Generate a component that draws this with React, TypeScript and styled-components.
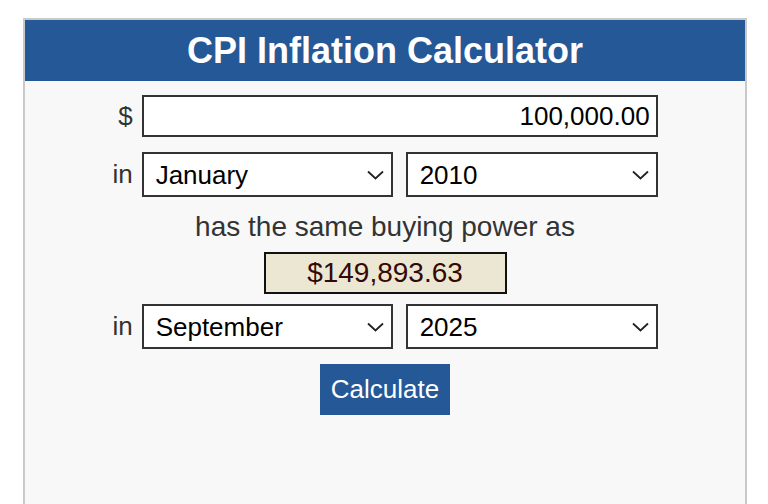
import React, { useState } from 'react';
import styled, { createGlobalStyle } from 'styled-components';

const GlobalStyle = createGlobalStyle`
  html, body {
    margin: 0;
    padding: 0;
    background: #ffffff;
    overflow: hidden;
  }
  body {
    font-family: "Liberation Sans", Arial, Helvetica, sans-serif;
  }
`;

const Page = styled.div`
  padding: 18px 0 0 23px;
`;

const Panel = styled.div`
  box-sizing: border-box;
  width: 724px;
  height: calc(100vh - 18px);
  border: 2px solid #c9c9c9;
  border-bottom: none;
  background: #f8f8f8;
`;

const Header = styled.h1`
  margin: 0;
  padding: 10px 0;
  background: #255897;
  color: #ffffff;
  font-size: 36px;
  line-height: 41px;
  font-weight: bold;
  text-align: center;
`;

const Form = styled.form`
  display: grid;
  grid-template-columns: auto 516px;
  column-gap: 9px;
  justify-content: center;
  align-items: center;
  padding-top: 14px;
`;

const Label = styled.label<{ $top?: number }>`
  justify-self: end;
  margin-top: ${p => p.$top ?? 0}px;
  font-size: 26px;
  color: #333333;
`;

const Row = styled.div<{ $top: number }>`
  grid-column: 2;
  margin-top: ${p => p.$top}px;
  display: grid;
  grid-template-columns: 251px 252px;
  column-gap: 13px;
`;

const AmountInput = styled.input`
  grid-column: 2;
  box-sizing: border-box;
  width: 516px;
  height: 42px;
  margin: 0;
  padding: 0 6px;
  border: 2px solid #333333;
  border-radius: 0;
  background: #ffffff;
  color: #000000;
  font-family: inherit;
  font-size: 26px;
  text-align: right;
  outline: none;
`;

const SelectWrap = styled.div`
  position: relative;
`;

const Select = styled.select`
  appearance: none;
  box-sizing: border-box;
  width: 100%;
  height: 45px;
  margin: 0;
  padding: 0 30px 0 12px;
  border: 2px solid #333333;
  border-radius: 0;
  background: #ffffff;
  color: #000000;
  font-family: inherit;
  font-size: 26px;
  outline: none;
`;

const Chevron = styled.svg`
  position: absolute;
  right: 9px;
  top: 18px;
  pointer-events: none;
`;

const Wide = styled.div<{ $top: number }>`
  grid-column: 1 / -1;
  justify-self: center;
  margin-top: ${p => p.$top}px;
`;

const SameText = styled(Wide)`
  font-size: 28px;
  line-height: 32px;
  color: #333333;
`;

const Result = styled(Wide)`
  box-sizing: border-box;
  width: 243px;
  height: 42px;
  border: 2px solid #111111;
  background: #ece7d2;
  color: #350808;
  font-size: 28px;
  line-height: 38px;
  text-align: center;
`;

const Button = styled.button`
  grid-column: 1 / -1;
  justify-self: center;
  margin-top: 15px;
  height: 51px;
  padding: 0 11px;
  border: none;
  border-radius: 0;
  background: #255897;
  color: #ffffff;
  font-family: inherit;
  font-size: 26px;
  cursor: pointer;
`;

const months = [
  'January', 'February', 'March', 'April', 'May', 'June',
  'July', 'August', 'September', 'October', 'November', 'December'
];
const years = Array.from({ length: 2025 - 1913 + 1 }, (_, i) => String(1913 + i));

const Dropdown: React.FC<{ value: string; options: string[]; onChange: (v: string) => void }> = ({
  value,
  options,
  onChange
}) => (
  <SelectWrap>
    <Select value={value} onChange={e => onChange(e.target.value)}>
      {options.map(o => (
        <option key={o} value={o}>{o}</option>
      ))}
    </Select>
    <Chevron width="17" height="10" viewBox="0 0 17 10">
      <path d="M1 1.5 L8.5 8.5 L16 1.5" fill="none" stroke="#222" strokeWidth="1.8" />
    </Chevron>
  </SelectWrap>
);

export default function App() {
  const [amount, setAmount] = useState('100,000.00');
  const [fromMonth, setFromMonth] = useState('January');
  const [fromYear, setFromYear] = useState('2010');
  const [toMonth, setToMonth] = useState('September');
  const [toYear, setToYear] = useState('2025');

  return (
    <Page>
      <GlobalStyle />
      <Panel>
        <Header>CPI Inflation Calculator</Header>
        <Form onSubmit={e => e.preventDefault()}>
          <Label htmlFor="amount">$</Label>
          <AmountInput id="amount" value={amount} onChange={e => setAmount(e.target.value)} />

          <Label $top={15}>in</Label>
          <Row $top={15}>
            <Dropdown value={fromMonth} options={months} onChange={setFromMonth} />
            <Dropdown value={fromYear} options={years} onChange={setFromYear} />
          </Row>

          <SameText $top={14}>has the same buying power as</SameText>
          <Result $top={9}>$149,893.63</Result>

          <Label $top={10}>in</Label>
          <Row $top={10}>
            <Dropdown value={toMonth} options={months} onChange={setToMonth} />
            <Dropdown value={toYear} options={years} onChange={setToYear} />
          </Row>

          <Button type="submit">Calculate</Button>
        </Form>
      </Panel>
    </Page>
  );
}
